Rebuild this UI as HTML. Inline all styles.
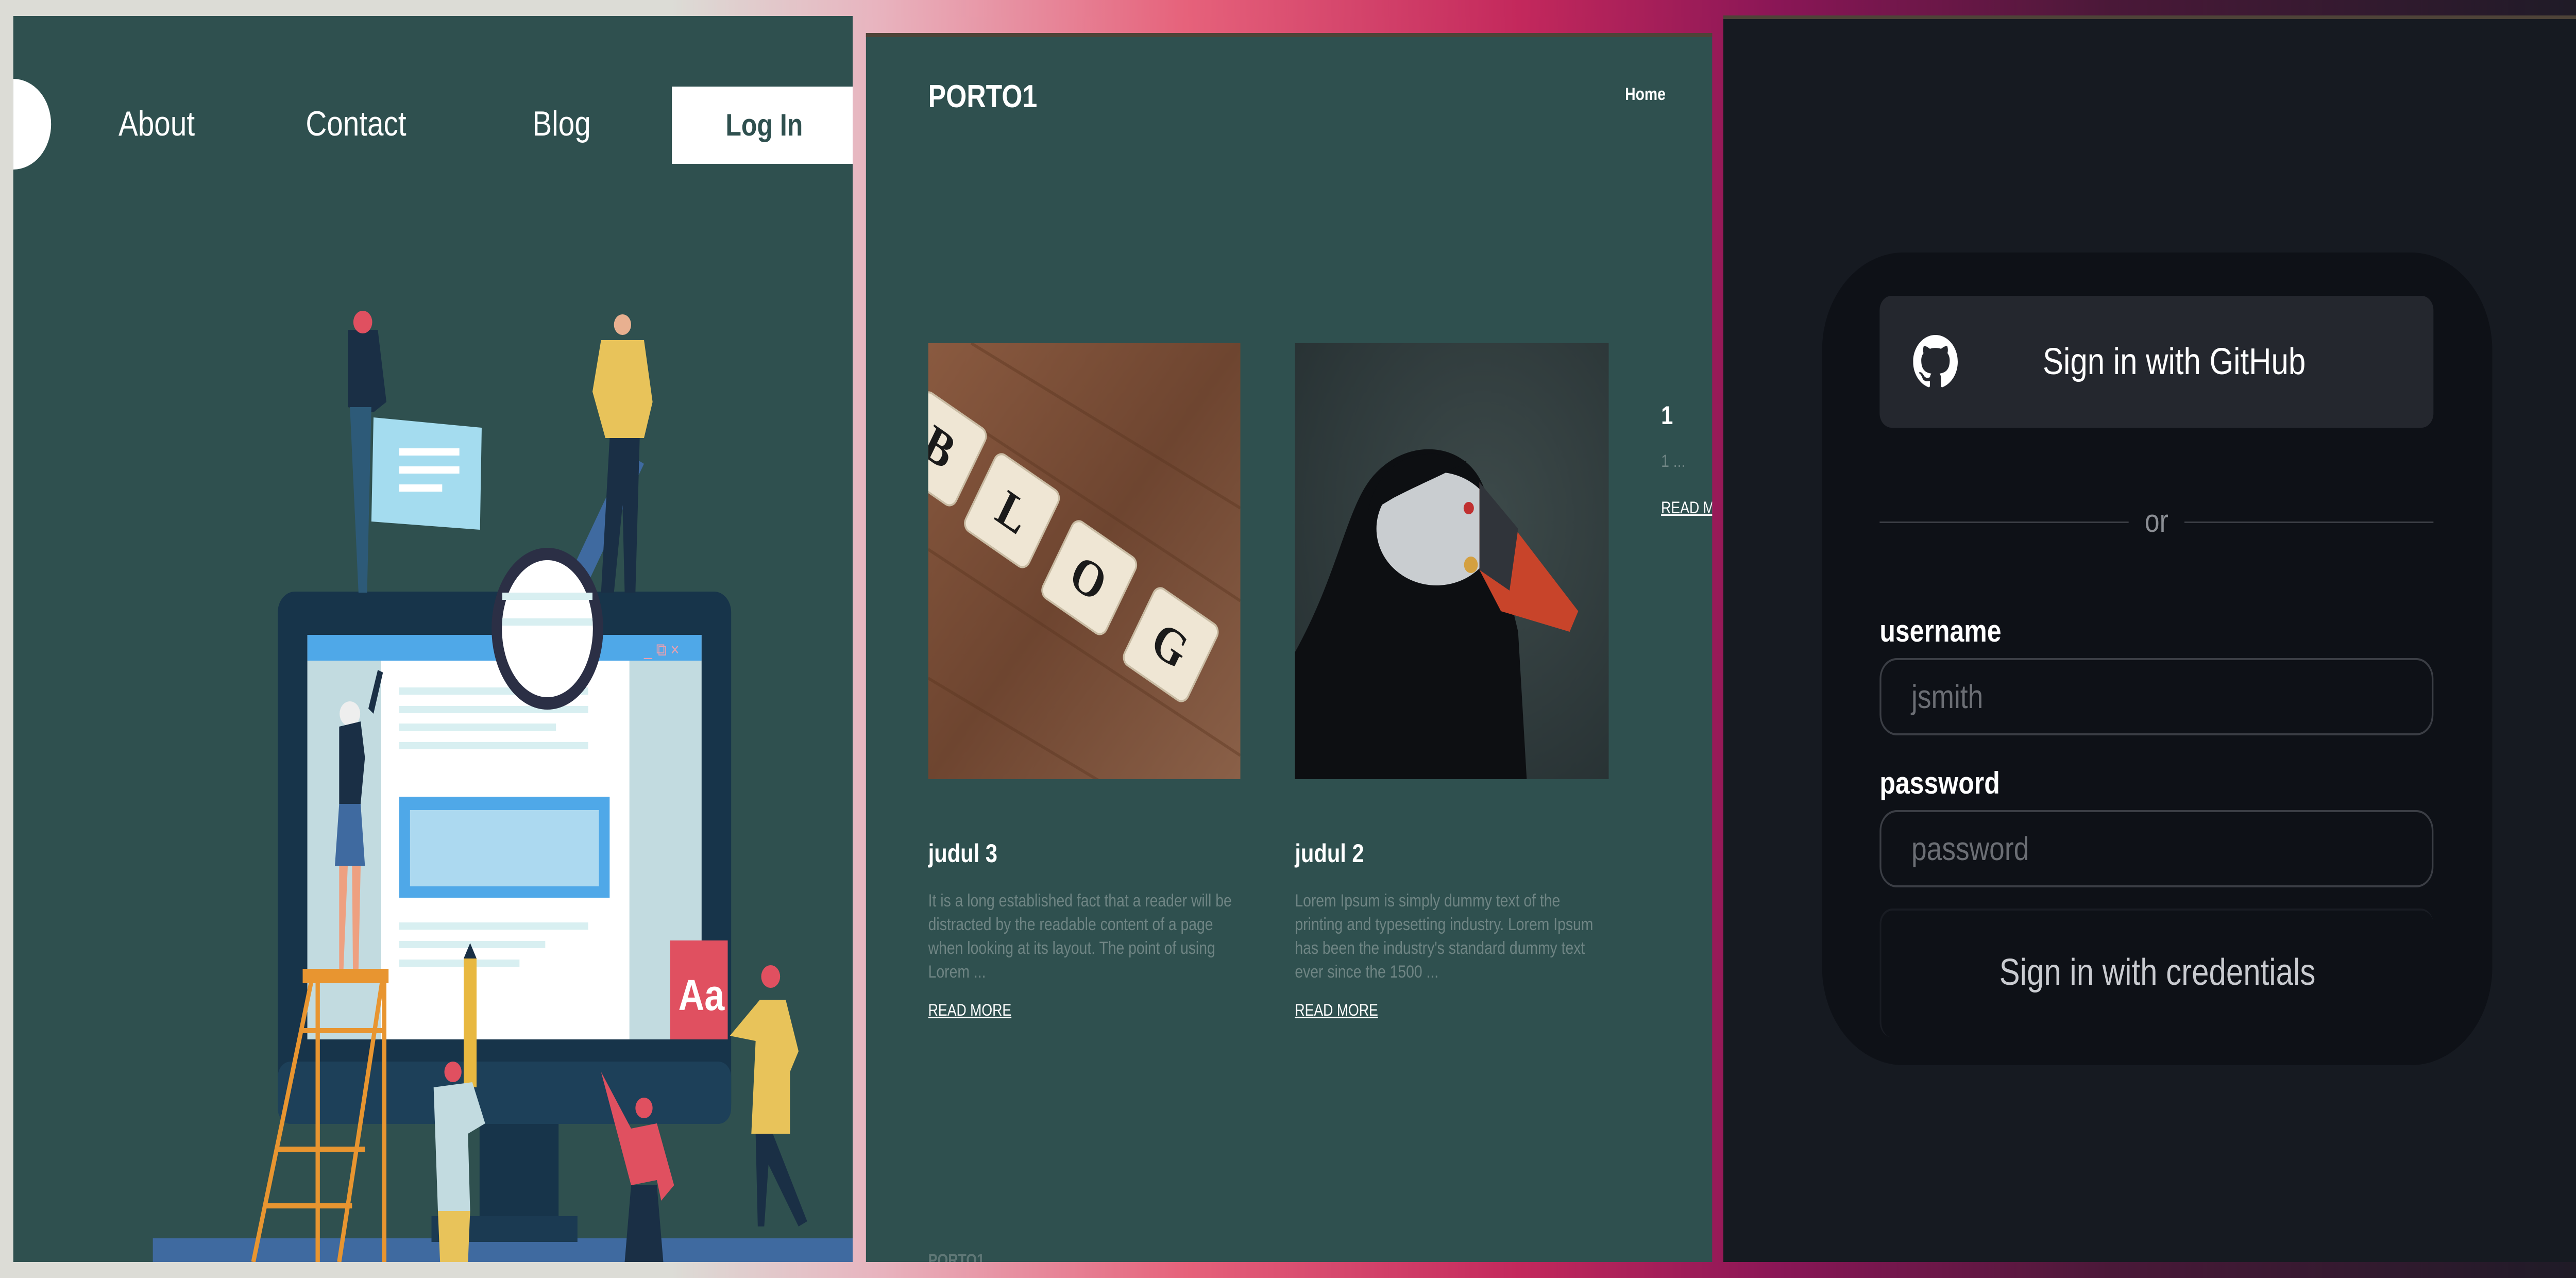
<!DOCTYPE html>
<html><head><meta charset="utf-8"><style>
*{margin:0;padding:0;box-sizing:border-box}
html,body{width:100%;height:100%;overflow:hidden;background:#1f1b27}
#root{position:absolute;left:0;top:0;width:6000px;height:2480px;transform-origin:0 0;overflow:hidden;font-family:"Liberation Sans",sans-serif;background:linear-gradient(90deg,#dcdcd6 0%,#dcdcd6 26%,#e8b4bf 34%,#e6627b 46%,#c3285c 59%,#8a1656 69%,#4a1838 82%,#1f1b27 100%)}
.a{position:absolute}
.p1{left:31px;top:31px;width:1955px;height:2418px;background:#2f504f;overflow:hidden}
.p2{left:2017px;top:64px;width:1971px;height:2385px;background:#2f504f;border-top:8px solid #4e4338;overflow:hidden}
.p3{left:4014px;top:30px;width:1986px;height:2419px;background:#161a21;border-top:7px solid #4e4338;overflow:hidden}
.nav{color:#fff;font-size:68px;top:170px}
.t{color:#fff}
.desc{color:#6f8584;font-size:34px;line-height:46px;width:720px}
.rm{color:#fff;font-size:32px;text-decoration:underline}
.inp{left:134px;width:1290px;height:150px;border:4px solid #3b3e45;border-radius:40px;color:#6b6e74;font-size:64px;padding-left:70px;line-height:142px;background:#0e1117}
.lbl{left:134px;color:#fff;font-weight:bold;font-size:60px}
</style></head><body>
<div id="root">
<div class="a p1">
  <div class="a" style="left:-88px;top:122px;width:176px;height:176px;border-radius:50%;background:#fff"></div>
  <div class="a nav" style="left:245px">About</div>
  <div class="a nav" style="left:681px">Contact</div>
  <div class="a nav" style="left:1209px">Blog</div>
  <div class="a" style="left:1534px;top:137px;width:430px;height:150px;background:#fff;color:#2f504f;font-size:60px;font-weight:bold;text-align:center;line-height:150px">Log In</div>
  <svg class="a" style="left:0;top:0" width="1955" height="2418" viewBox="31 31 1955 2418">
    <rect x="356" y="2403" width="1630" height="50" fill="#3f6aa0"/>
    <rect x="1117" y="2170" width="184" height="235" fill="#17344a"/>
    <rect x="1005" y="2360" width="340" height="50" fill="#1b3a52"/>
    <rect x="647" y="1148" width="1056" height="1033" rx="40" fill="#17344a"/>
    <rect x="647" y="2060" width="1056" height="121" rx="30" fill="#1d4059"/>
    <rect x="716" y="1232" width="918" height="785" fill="#fff"/>
    <rect x="716" y="1232" width="918" height="50" fill="#4fa8e8"/>
    <rect x="716" y="1282" width="172" height="735" fill="#c2dbe0"/>
    <rect x="1466" y="1282" width="168" height="735" fill="#c2dbe0"/>
    <g fill="#d8eff1">
      <rect x="930" y="1334" width="440" height="14"/><rect x="930" y="1370" width="440" height="14"/>
      <rect x="930" y="1404" width="365" height="14"/><rect x="930" y="1440" width="440" height="14"/>
      <rect x="930" y="1790" width="440" height="14"/><rect x="930" y="1826" width="340" height="14"/>
      <rect x="930" y="1862" width="280" height="14"/>
    </g>
    <rect x="930" y="1546" width="490" height="196" fill="#4fa8e8"/>
    <rect x="955" y="1572" width="440" height="148" fill="#acd9f0"/>
    <text x="1500" y="1272" fill="#e8a0b0" font-size="34" font-family="Liberation Sans">_ ⧉ ×</text>
    <polygon points="1330,1110 1460,880 1500,900 1370,1130" fill="#3f6aa0"/>
    <ellipse cx="1275" cy="1220" rx="118" ry="145" fill="#fff" stroke="#2b2f45" stroke-width="24"/>
    <rect x="1170" y="1150" width="210" height="14" fill="#d8eff1"/><rect x="1170" y="1200" width="210" height="14" fill="#d8eff1"/>
    <polygon points="870,810 1122,830 1118,1028 865,1012" fill="#a4dcef"/>
    <g fill="#fff"><rect x="930" y="870" width="140" height="14"/><rect x="930" y="905" width="140" height="14"/><rect x="930" y="940" width="100" height="14"/></g>
    <polygon points="810,640 880,640 900,780 870,800 810,790" fill="#1a2f45"/>
    <polygon points="815,790 865,790 855,1150 835,1150" fill="#2d5a78"/>
    <circle cx="845" cy="625" r="22" fill="#e05060"/>
    <circle cx="1450" cy="630" r="20" fill="#e8b090"/>
    <polygon points="1400,660 1500,660 1520,780 1500,850 1410,850 1380,760" fill="#e8c35a"/>
    <polygon points="1420,850 1490,850 1480,1150 1455,1150 1450,980 1430,1150 1400,1150" fill="#1a2f45"/>
    <circle cx="815" cy="1385" r="24" fill="#eee"/>
    <polygon points="790,1410 840,1400 850,1470 840,1560 790,1560" fill="#1a2f45"/>
    <polygon points="858,1375 880,1300 892,1305 870,1385" fill="#1a2f45"/>
    <polygon points="790,1560 840,1560 850,1680 780,1680" fill="#3f6aa0"/>
    <polygon points="790,1680 810,1680 800,1880 790,1880" fill="#eea080"/>
    <polygon points="820,1680 840,1680 835,1880 822,1880" fill="#eea080"/>
    <rect x="705" y="1880" width="200" height="28" fill="#e89530"/>
    <g stroke="#e89530" stroke-width="10" fill="none">
      <line x1="725" y1="1905" x2="590" y2="2449"/><line x1="890" y1="1905" x2="790" y2="2449"/>
      <line x1="740" y1="1905" x2="740" y2="2449"/><line x1="895" y1="1905" x2="895" y2="2449"/>
      <line x1="640" y1="2230" x2="850" y2="2230"/><line x1="615" y1="2340" x2="820" y2="2340"/>
      <line x1="700" y1="2000" x2="895" y2="2000"/>
    </g>
    <rect x="1080" y="1860" width="30" height="250" fill="#e8b840"/>
    <polygon points="1080,1860 1095,1830 1110,1860" fill="#1a2f45"/>
    <circle cx="1055" cy="2080" r="20" fill="#e05060"/>
    <polygon points="1010,2110 1100,2100 1130,2180 1090,2200 1095,2350 1020,2350" fill="#c2dbe0"/>
    <polygon points="1020,2350 1095,2350 1090,2449 1025,2449" fill="#e8c35a"/>
    <circle cx="1500" cy="2150" r="20" fill="#e05060"/>
    <polygon points="1400,2080 1470,2190 1530,2180 1570,2300 1540,2330 1530,2290 1470,2300" fill="#e05060"/>
    <polygon points="1470,2300 1530,2300 1545,2449 1455,2449" fill="#1a2f45"/>
    <rect x="1561" y="1825" width="134" height="192" fill="#e05060"/>
    <text x="1580" y="1960" fill="#fff" font-size="84" font-weight="bold" font-family="Liberation Sans">Aa</text>
    <circle cx="1795" cy="1895" r="22" fill="#e05060"/>
    <polygon points="1700,2010 1770,1940 1830,1940 1860,2040 1840,2080 1840,2200 1750,2200 1760,2020" fill="#e8c35a"/>
    <polygon points="1760,2200 1800,2200 1880,2370 1860,2380 1790,2260 1780,2380 1765,2380" fill="#1a2f45"/>
  </svg>
</div>

<div class="a p2">
  <div class="a t" style="left:145px;top:80px;font-size:62px;font-weight:bold">PORTO1</div>
  <div class="a t" style="left:1768px;top:92px;font-size:34px;font-weight:bold">Home</div>
  <svg class="a" style="left:145px;top:594px" width="727" height="846" viewBox="0 0 727 846">
    <defs><linearGradient id="w" x1="0" y1="0" x2="1" y2="1"><stop offset="0" stop-color="#8a5a40"/><stop offset=".5" stop-color="#6e4530"/><stop offset="1" stop-color="#8a6048"/></linearGradient></defs>
    <rect width="727" height="846" fill="url(#w)"/>
    <g stroke="#5a3520" stroke-width="6" opacity=".4"><line x1="0" y1="100" x2="727" y2="500"/><line x1="0" y1="400" x2="727" y2="800"/><line x1="0" y1="650" x2="500" y2="900"/><line x1="100" y1="0" x2="727" y2="320"/></g>
    <g fill="#efe6d4" stroke="#c9bca4" stroke-width="4">
      <rect x="-60" y="120" width="170" height="170" rx="18" transform="rotate(30 25 205)"/>
      <rect x="110" y="240" width="170" height="170" rx="18" transform="rotate(30 195 325)"/>
      <rect x="290" y="370" width="170" height="170" rx="18" transform="rotate(30 375 455)"/>
      <rect x="480" y="500" width="170" height="170" rx="18" transform="rotate(30 565 585)"/>
    </g>
    <g fill="#1a1a1a" font-family="Liberation Serif" font-weight="bold" font-size="100">
      <text x="-10" y="235" transform="rotate(30 25 205)">B</text>
      <text x="165" y="360" transform="rotate(30 195 325)">L</text>
      <text x="335" y="490" transform="rotate(30 375 455)">O</text>
      <text x="525" y="620" transform="rotate(30 565 585)">G</text>
    </g>
  </svg>
  <svg class="a" style="left:999px;top:594px" width="731" height="846" viewBox="0 0 731 846">
    <defs><radialGradient id="pb" cx=".6" cy=".4" r=".8"><stop offset="0" stop-color="#3d4a4a"/><stop offset="1" stop-color="#263032"/></radialGradient></defs>
    <rect width="731" height="846" fill="url(#pb)"/>
    <path d="M0 846 L0 600 C100 450 120 320 180 260 C260 180 400 190 440 280 L520 560 L540 846 Z" fill="#0d0f12"/>
    <ellipse cx="330" cy="360" rx="140" ry="110" fill="#c9cdd0"/>
    <path d="M170 330 C190 230 290 190 400 230 C360 250 300 270 230 300 Z" fill="#0d0f12"/>
    <path d="M430 270 L660 520 L640 560 L480 520 L430 440 Z" fill="#c8442a"/>
    <path d="M430 270 L520 360 L500 480 L430 440 Z" fill="#30343a"/>
    <circle cx="405" cy="320" r="12" fill="#c03030"/>
    <circle cx="410" cy="430" r="16" fill="#d4a040"/>
  </svg>
  <div class="a t" style="left:145px;top:1555px;font-size:50px;font-weight:bold">judul 3</div>
  <div class="a desc" style="left:145px;top:1653px">It is a long established fact that a reader will be distracted by the readable content of a page when looking at its layout. The point of using Lorem ...</div>
  <div class="a rm" style="left:145px;top:1870px">READ MORE</div>
  <div class="a t" style="left:999px;top:1555px;font-size:50px;font-weight:bold">judul 2</div>
  <div class="a desc" style="left:999px;top:1653px">Lorem Ipsum is simply dummy text of the printing and typesetting industry. Lorem Ipsum has been the industry's standard dummy text ever since the 1500 ...</div>
  <div class="a rm" style="left:999px;top:1870px">READ MORE</div>
  <div class="a t" style="left:1852px;top:705px;font-size:50px;font-weight:bold">1</div>
  <div class="a desc" style="left:1852px;top:800px;width:110px">1 ...</div>
  <div class="a rm" style="left:1852px;top:895px;white-space:nowrap">READ MORE</div>
  <div class="a" style="left:145px;top:2355px;font-size:32px;font-weight:bold;color:#5f7776">PORTO1</div>
</div>

<div class="a p3">
  <div class="a" style="left:230px;top:453px;width:1561px;height:1577px;border-radius:190px;background:#0e1117">
    <div class="a" style="left:134px;top:84px;width:1290px;height:256px;border-radius:28px;background:#24272e">
      <svg class="a" style="left:78px;top:76px" width="104" height="104" viewBox="0 0 16 16"><path fill="#fff" d="M8 0C3.58 0 0 3.58 0 8c0 3.54 2.29 6.530 5.47 7.590.4.07.55-.17.55-.38 0-.19-.01-.82-.01-1.49-2.010.37-2.530-.49-2.690-.94-.09-.23-.48-.94-.82-1.130-.28-.15-.68-.52-.01-.53.63-.01 1.080.58 1.230.82.72 1.210 1.870.87 2.330.66.07-.52.28-.87.51-1.070-1.780-.2-3.640-.89-3.640-3.950 0-.87.31-1.590.82-2.150-.08-.2-.36-1.020.08-2.120 0 0 .67-.21 2.200.82.64-.18 1.320-.27 2-.27.68 0 1.360.09 2 .27 1.530-1.040 2.200-.82 2.200-.82.44 1.100.16 1.920.08 2.120.51.56.82 1.270.82 2.150 0 3.070-1.870 3.750-3.650 3.950.29.25.54.73.54 1.480 0 1.070-.01 1.930-.01 2.200 0 .21.15.46.55.38A8.013 8.013 0 0016 8c0-4.420-3.580-8-8-8z"/></svg>
      <div class="a" style="left:380px;top:0;line-height:256px;font-size:72px;color:#fff;white-space:nowrap">Sign in with GitHub</div>
    </div>
    <div class="a" style="left:134px;top:522px;width:580px;height:3px;background:#3b3e45"></div>
    <div class="a" style="left:844px;top:522px;width:580px;height:3px;background:#3b3e45"></div>
    <div class="a" style="left:714px;top:486px;width:130px;text-align:center;font-size:62px;color:#8b8e94">or</div>
    <div class="a lbl" style="top:700px">username</div>
    <div class="a inp" style="top:787px">jsmith</div>
    <div class="a lbl" style="top:995px">password</div>
    <div class="a inp" style="top:1082px">password</div>
    <div class="a" style="left:134px;top:1273px;width:1290px;height:250px;border-radius:30px;border-top:4px solid #191c23;border-left:4px solid #191c23;text-align:center;line-height:240px;font-size:72px;color:#c9cbd0;white-space:nowrap">Sign in with credentials</div>
  </div>
</div>
</div>
<script>
(function(){var r=document.getElementById('root');function f(){var sx=window.innerWidth/6000,sy=window.innerHeight/2480;r.style.transform='scale('+sx+','+sy+')';}f();window.addEventListener('resize',f);})();
</script>
</body></html>
